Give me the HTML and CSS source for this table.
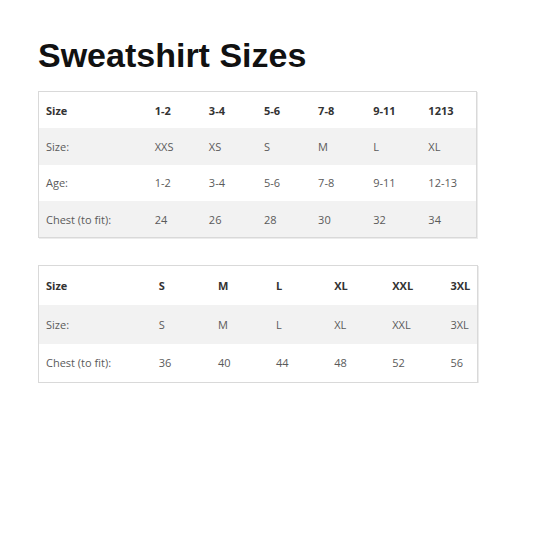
FILE: index.html
```html
<!DOCTYPE html>
<html>
<head>
<meta charset="utf-8">
<link rel="stylesheet" href="styles.css">
</head>
<body>
<main class="page">
  <h1 class="title">Sweatshirt Sizes</h1>
  <table class="sizes kids">
    <colgroup>
      <col class="c-label"><col class="c54"><col class="c55"><col class="c54"><col class="c55"><col class="c55"><col class="c-last">
    </colgroup>
    <thead>
      <tr><th>Size</th><th>1-2</th><th>3-4</th><th>5-6</th><th>7-8</th><th>9-11</th><th>1213</th></tr>
    </thead>
    <tbody>
      <tr class="shade"><td>Size:</td><td>XXS</td><td>XS</td><td>S</td><td>M</td><td>L</td><td>XL</td></tr>
      <tr><td>Age:</td><td>1-2</td><td>3-4</td><td>5-6</td><td>7-8</td><td>9-11</td><td>12-13</td></tr>
      <tr class="shade"><td>Chest (to fit):</td><td>24</td><td>26</td><td>28</td><td>30</td><td>32</td><td>34</td></tr>
    </tbody>
  </table>

  <table class="sizes adults">
    <colgroup>
      <col class="c-label2"><col class="c59"><col class="c58"><col class="c58"><col class="c58"><col class="c58"><col class="c-last2">
    </colgroup>
    <thead>
      <tr><th>Size</th><th>S</th><th>M</th><th>L</th><th>XL</th><th>XXL</th><th>3XL</th></tr>
    </thead>
    <tbody>
      <tr class="shade"><td>Size:</td><td>S</td><td>M</td><td>L</td><td>XL</td><td>XXL</td><td>3XL</td></tr>
      <tr><td>Chest (to fit):</td><td>36</td><td>40</td><td>44</td><td>48</td><td>52</td><td>56</td></tr>
    </tbody>
  </table>
</main>
</body>
</html>
```

FILE: styles.css
```css
html, body {
  margin: 0;
  padding: 0;
  background: #ffffff;
}

.page {
  padding: 35px 0 0 38px;
}

.title {
  margin: 0;
  font-family: "Liberation Sans", Arial, sans-serif;
  font-weight: 700;
  font-size: 34px;
  line-height: 40px;
  color: #111111;
  letter-spacing: 0;
}

.sizes {
  border-collapse: collapse;
  table-layout: fixed;
  border: 1px solid #d9d9d9;
  box-shadow: 1px 1px 0 #ececec;
  font-family: "Open Sans", "Noto Sans", sans-serif;
  font-size: 11px;
}

.kids {
  margin-top: 16px;
  width: 439px;
}

.adults {
  margin-top: 27px;
  width: 440px;
}

.sizes th,
.sizes td {
  padding: 0;
  text-align: left;
  vertical-align: middle;
  white-space: nowrap;
}

.sizes th:first-child,
.sizes td:first-child {
  padding-left: 7px;
}

.sizes th {
  font-weight: 700;
  color: #333333;
}

.sizes td {
  font-weight: 400;
  color: #5a5a5a;
}

.kids tr {
  height: 36.5px;
}

.adults tr {
  height: 39px;
}

.shade {
  background: #f2f2f2;
}

.c-label { width: 116px; }
.c54 { width: 54px; }
.c55 { width: 55px; }
.c-last { width: 48px; }

.c-label2 { width: 120px; }
.c59 { width: 59px; }
.c58 { width: 58px; }
.c-last2 { width: 27px; }
```
